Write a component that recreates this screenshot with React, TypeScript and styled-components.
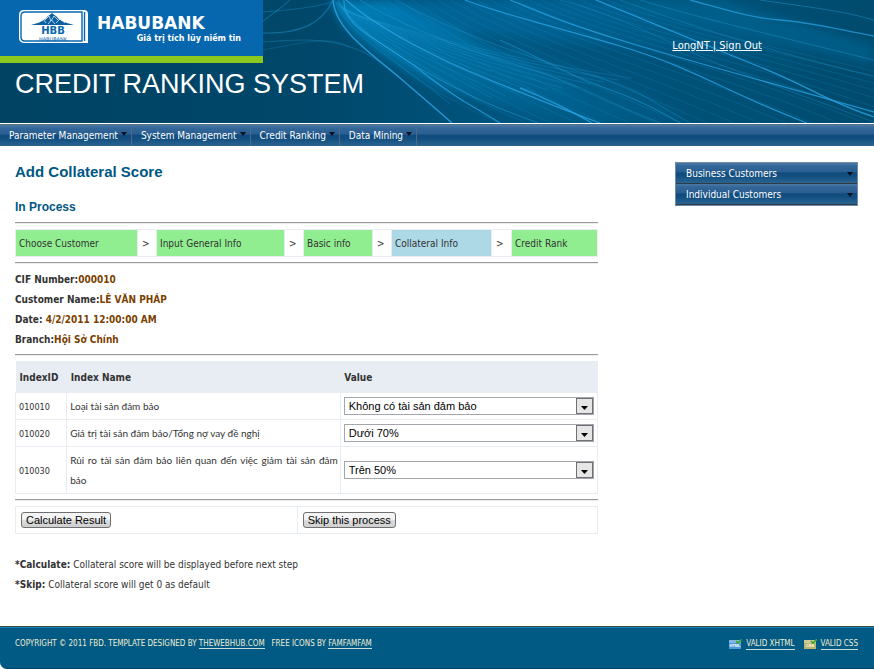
import React from "react";
import styled, { createGlobalStyle } from "styled-components";

const ui = `"DejaVu Sans Condensed", "DejaVu Sans", sans-serif`;
const arial = `"Liberation Sans", Arial, sans-serif`;
const rule = "#e8edf4";

const GlobalStyle = createGlobalStyle`
  * { box-sizing: border-box; }
  body { margin: 0; background: #fff; color: #333; font: 10px/20px ${ui}; }
`;

const Page = styled.div`
  display: flex;
  flex-direction: column;
  min-height: 100vh;
`;

const Header = styled.header`
  position: relative;
  height: 123px;
  overflow: hidden;
  background: #004a6c;
  display: flex;
  justify-content: space-between;
`;

const Artwork = styled.svg`
  position: absolute;
  top: 0;
  left: 0;
  width: 100%;
  height: 100%;
`;

const Brand = styled.div`
  position: relative;
`;

const LogoPanel = styled.div`
  width: 263px;
  height: 63px;
  background: #0767ae;
  border-bottom: 7px solid #8cc81e;
`;

const SystemTitle = styled.h1`
  margin: 5px 0 0 15px;
  font: 27px/32px ${arial};
  color: #fff;
  white-space: nowrap;
`;

const Account = styled.a`
  position: relative;
  margin: 36px 112px 0 0;
  align-self: flex-start;
  color: #fff;
  font-size: 11px;
`;

const barFill = `linear-gradient(#4b7aa3 0, #336699 15%, #2b5f92 42%, #104b7d 50%, #124f80 65%, #2a6491 100%)`;

const Nav = styled.nav`
  display: flex;
  margin-top: 1px;
  height: 22px;
  background: ${barFill};
  border-top: 1px solid #54718c;
`;

const NavItem = styled.a`
  display: flex;
  gap: 3px;
  padding: 0 4px 0 9px;
  border-right: 1px solid #4c6b8a;
  color: #fff;
  line-height: 22px;
  text-decoration: none;
`;

const NavArrow = styled.svg`
  width: 6px;
  height: 4px;
  margin-top: 7px;
`;

const Content = styled.div`
  flex: 1 0 auto;
  display: grid;
  grid-template-columns: minmax(0, 1fr) 183px;
  gap: 77px;
  padding: 16px 16px 30px 15px;
  align-items: start;
`;

const Heading = styled.h2`
  margin: 0 0 15px;
  font: bold 15px/20px ${arial};
  color: #005782;
`;

const SubHeading = styled.h3`
  margin: 0 0 5px;
  font: bold 12px/20px ${arial};
  color: #005782;
`;

const Divider = styled.hr`
  height: 2px;
  margin: 0;
  border: 0;
  border-top: 1px solid #9a9a9a;
  border-bottom: 1px solid #eee;
`;

const Steps = styled.ol`
  display: grid;
  grid-template-columns: 121fr 18fr 127fr 18fr 68fr 18fr 99fr 19fr 85fr;
  gap: 1px;
  margin: 5px 0;
  padding: 1px;
  background: ${rule};
  list-style: none;
`;

const Step = styled.li<{ $kind: "done" | "current" | "arrow" }>`
  padding: 4px 3px 2px;
  padding-left: ${(p) => (p.$kind === "arrow" ? 4 : 3)}px;
  background: ${(p) => ({ done: "#90ee90", current: "#add8e6", arrow: "#fff" })[p.$kind]};
  white-space: nowrap;
`;

const Facts = styled.dl`
  margin: 6px 0 4px;
  font-weight: bold;
`;

const Fact = styled.div`
  display: flex;
  white-space: pre;
`;

const FactValue = styled.dd`
  margin: 0;
  color: #7b3f00;
`;

const Table = styled.table`
  width: 100%;
  margin: 5px 0;
  border-collapse: collapse;
  table-layout: fixed;
`;

const Col = styled.col<{ $share: number }>`
  width: ${(p) => p.$share}%;
`;

const HeadCell = styled.th`
  height: 31px;
  padding: 3px 4px 0;
  background: ${rule};
  text-align: left;
  white-space: nowrap;
`;

const Cell = styled.td`
  padding: 3px;
  border: 1px solid ${rule};
`;

const NameCell = styled(Cell)`
  padding: 3px 2px 3px 3px;
  font-family: Lato, ${ui};
  text-align: justify;
`;

const CodeCell = styled(Cell)`
  padding: 4px 3px 2px;
  font-size: 9px;
`;

const ActionCell = styled(Cell)`
  padding: 5px;
  line-height: 16px;
`;

const Picker = styled.div`
  position: relative;
  display: flex;
`;

const Select = styled.select`
  appearance: none;
  width: 100%;
  height: 18px;
  margin: 1px 0;
  padding: 0 20px 0 4px;
  border: 1px solid #a5a5ad;
  border-radius: 0;
  background: #fff;
  color: #000;
  font: 11px/16px ${arial};
`;

const PickerButton = styled.svg`
  position: absolute;
  right: 1px;
  top: 2px;
  width: 17px;
  height: 16px;
  pointer-events: none;
`;

const Button = styled.button`
  display: block;
  height: 16px;
  padding: 0 4px;
  border: 1px solid #707070;
  border-radius: 3px;
  background: linear-gradient(#f4f4f4 0 45%, #dddddd 50%, #cfcfcf);
  color: #000;
  font: 11px/14px ${arial};
`;

const Notes = styled.div`
  margin-top: 21px;
`;

const Note = styled.p`
  margin: 0;
`;

const Side = styled.nav`
  border: 1px solid #6f8ba5;
`;

const SideItem = styled.a`
  display: flex;
  justify-content: space-between;
  align-items: center;
  height: 21px;
  padding: 2px 4px 0 10px;
  background: ${barFill};
  border-bottom: 1px solid #303a44;
  color: #fff;
  text-decoration: none;
`;

const SideArrow = styled.svg`
  width: 6px;
  height: 4px;
`;

const Footer = styled.footer`
  display: flex;
  flex-shrink: 0;
  justify-content: space-between;
  height: 43px;
  padding: 7px 16px 0 15px;
  border-top: 1px solid #444;
  border-bottom: 1px solid #00466c;
  box-shadow: inset 0 1px #0d87b8;
  border-bottom-left-radius: 7px;
  background: #005a83;
  color: #f2ecd2;
  font-size: 8px;
  white-space: pre;
`;

const FootLink = styled.a`
  color: inherit;
  text-decoration: none;
  border-bottom: 1px solid #c8dcdc;
`;

const Badges = styled.div`
  display: flex;
  gap: 9px;
`;

const Badge = styled.span`
  display: flex;
  align-items: center;
  gap: 4px;
  line-height: 10px;
  height: 20px;
`;

type Stroke = [d: string, width: number, opacity: number];

const strokes: Stroke[] = [
  ["M333 0C335 30 372 54 400 78S435 108 452 123", 1.4, 0.85],
  ["M344 0C342 28 382 40 420 70S470 104 500 123", 1.2, 0.75],
  ["M338 0C350 30 420 70 460 90S510 112 538 123", 1, 0.5],
  ["M346 0C380 30 440 60 490 80S550 105 600 123", 1.3, 0.8],
  ["M360 0C400 25 460 48 520 66S590 95 660 123", 0.8, 0.45],
  ["M395 0C450 30 520 55 580 72S640 95 690 123", 0.8, 0.4],
  ["M465 0C500 14 540 22 620 46S720 90 807 123", 1.3, 0.75],
  ["M510 0C540 12 560 22 630 43S760 80 874 112", 1.3, 0.75],
  ["M596 0C650 22 710 47 760 67S830 103 874 117", 1.3, 0.8],
  ["M560 0C600 10 640 28 680 47S760 80 874 122", 0.8, 0.35],
  ["M690 0C720 8 750 18 780 20S840 30 874 36", 1.3, 0.7],
  ["M640 0C700 18 760 32 874 60", 0.9, 0.4],
  ["M620 0C680 22 770 52 874 76", 0.8, 0.4],
  ["M760 0C800 6 840 10 874 20", 0.9, 0.45],
  ["M500 40C540 58 570 75 600 86S650 105 680 123", 1, 0.5],
  ["M520 88C550 100 570 110 592 123", 1.4, 0.75],
  ["M262 33C300 34 322 24 333 0", 1.2, 0.4],
  ["M262 42C300 40 340 34 380 62", 1, 0.3],
  ["M262 22C272 14 284 6 290 0", 1, 0.45],
  ["M262 12C290 10 310 8 333 2", 1, 0.3],
  ["M262 50C300 44 330 34 350 48", 1, 0.2],
];

const fan = Array.from({ length: 22 }, (_, i) => {
  const end = 500 + i * 26;
  const start = 334 + i * 13;
  return `M${start} 0C${start + 40 + i * 2} 36 ${end - 110} 76 ${end} 123`;
});

const veil = Array.from({ length: 14 }, (_, i) => `M${335 + i} ${i}C${345 + i * 6} 34 ${400 + i * 9} 62 ${450 + i * 14} ${104 - i * 2}`);

function Streams() {
  return (
    <Artwork viewBox="0 0 874 123" preserveAspectRatio="xMinYMin slice" aria-hidden="true">
      <defs>
        <linearGradient id="sea" x1="0" x2="1">
          <stop offset="0" stopColor="#004363" />
          <stop offset="0.35" stopColor="#00476a" />
          <stop offset="0.6" stopColor="#005680" />
          <stop offset="1" stopColor="#004b6e" />
        </linearGradient>
        <linearGradient id="beam" x1="0" y1="0" x2="1" y2="1">
          <stop offset="0" stopColor="#0092d2" stopOpacity="0.75" />
          <stop offset="0.6" stopColor="#0083bd" stopOpacity="0.4" />
          <stop offset="1" stopColor="#0074a8" stopOpacity="0" />
        </linearGradient>
        <linearGradient id="glow" x1="0" y1="0" x2="1" y2="0.5">
          <stop offset="0" stopColor="#0078b4" stopOpacity="0.6" />
          <stop offset="1" stopColor="#0078b4" stopOpacity="0" />
        </linearGradient>
        <filter id="soft"><feGaussianBlur stdDeviation="5" /></filter>
      </defs>
      <rect width="874" height="123" fill="url(#sea)" />
      <g filter="url(#soft)">
        <path d="M332 0C335 25 380 60 440 90L560 123H640C560 80 480 40 390 0Z" fill="url(#beam)" />
        <path d="M345 0H600L874 60V95C700 50 560 40 420 30Z" fill="url(#glow)" />
        <path d="M600 0H720L874 45V65Z" fill="#0078b0" opacity="0.35" />
        <path d="M500 45L640 90L690 123H580Z" fill="#0074a8" opacity="0.2" />
      </g>
      <g fill="none" stroke="#1a95d2">
        {fan.map((d) => <path key={d} d={d} strokeWidth="0.8" opacity="0.25" />)}
        {veil.map((d) => <path key={d} d={d} strokeWidth="1" opacity="0.3" />)}
      </g>
      <g fill="none" stroke="#2aa4e4">
        {strokes.map(([d, w, o]) => <path key={d} d={d} strokeWidth={w} opacity={o} />)}
      </g>
    </Artwork>
  );
}

function Logo() {
  return (
    <svg width="263" height="56" viewBox="0 0 263 56" role="img" aria-label="Habubank">
      <path d="M24 10H84Q88 10 88 14V43H25Q19 43 19 38V15Q19 10 24 10Z" fill="#fff" />
      <path d="M25 12H82V41H25Q21 41 21 37V16Q21 12 25 12Z" fill="none" stroke="#0767ae" strokeWidth="1.4" />
      <path d="M84.500 12V41" stroke="#0767ae" strokeWidth="1.4" />
      <path d="M31 25Q44 22 48 16Q50 15 52 13Q54 15 56 16Q60 22 74 25Z" fill="#0c5fa0" />
      <path d="M38 23L43 19L46 23M45 20L49 16L51 21L54 16L58 20M56 23L60 19L65 23M48 24L51.500 20L55 24" fill="none" stroke="#d8ecfa" strokeWidth="0.8" />
      <text x="53" y="34" textAnchor="middle" fontFamily="DejaVu Sans, sans-serif" fontWeight="700" fontSize="10" fill="#0767ae">HBB</text>
      <text x="53" y="41" textAnchor="middle" fontFamily="DejaVu Sans, sans-serif" fontSize="5" fill="#0767ae">HABUBANK</text>
      <text x="97" y="29" fontFamily="DejaVu Sans, sans-serif" fontWeight="700" fontSize="17" fill="#fff">HABUBANK</text>
      <text x="241" y="41" textAnchor="end" fontFamily="DejaVu Sans, sans-serif" fontWeight="700" fontSize="8" fill="#fff">Giá trị tích lũy niềm tin</text>
    </svg>
  );
}

function ValidIcon({ label, tone }: { label: string; tone: string }) {
  return (
    <svg width="13" height="10" viewBox="0 0 13 10" aria-hidden="true">
      <rect y="1" width="12" height="9" fill={tone} />
      <rect y="1" width="12" height="3" fill="#fff" opacity="0.3" />
      <text x="6" y="8" textAnchor="middle" fontFamily="Liberation Sans, sans-serif" fontWeight="700" fontSize="4" fill="#fff">{label}</text>
      <path d="M7 2L9 4L13 0" fill="none" stroke="#35a52c" strokeWidth="1.6" />
    </svg>
  );
}

const menus = ["Parameter Management", "System Management", "Credit Ranking", "Data Mining"];
const steps = ["Choose Customer", "Input General Info", "Basic info", "Collateral Info", "Credit Rank"];
const facts = [
  ["CIF Number:", "000010"],
  ["Customer Name:", "LÊ VĂN PHÁP"],
  ["Date: ", "4/2/2011 12:00:00 AM"],
  ["Branch:", "Hội Sở Chính"],
];
const rows = [
  ["010010", "Loại tài sản đảm bảo", "Không có tài sản đảm bảo"],
  ["010020", "Giá trị tài sản đảm bảo/Tổng nợ vay đề nghị", "Dưới 70%"],
  ["010030", "Rủi ro tài sản đảm bảo liên quan đến việc giảm tài sản đảm bảo", "Trên 50%"],
];

export default function App() {
  return (
    <Page>
      <GlobalStyle />
      <Header>
        <Streams />
        <Brand>
          <LogoPanel><Logo /></LogoPanel>
          <SystemTitle>CREDIT RANKING SYSTEM</SystemTitle>
        </Brand>
        <Account href="#account">LongNT | Sign Out</Account>
      </Header>
      <Nav>
        {menus.map((m) => (
          <NavItem key={m} href="#menu">
            {m}
            <NavArrow viewBox="0 0 6 4"><path d="M0 0H6L3 4Z" fill="#06121f" /></NavArrow>
          </NavItem>
        ))}
      </Nav>
      <Content>
        <main>
          <Heading>Add Collateral Score</Heading>
          <SubHeading>In Process</SubHeading>
          <Divider />
          <Steps>
            {steps.map((s, i) => (
              <React.Fragment key={s}>
                {i > 0 && <Step $kind="arrow" aria-hidden="true">&gt;</Step>}
                <Step $kind={s === "Collateral Info" ? "current" : "done"}>{s}</Step>
              </React.Fragment>
            ))}
          </Steps>
          <Divider />
          <Facts>
            {facts.map(([k, v]) => (
              <Fact key={k}><dt>{k}</dt><FactValue>{v}</FactValue></Fact>
            ))}
          </Facts>
          <Divider />
          <Table>
            <colgroup><Col $share={8.8} /><Col $share={47} /><Col $share={44.2} /></colgroup>
            <thead>
              <tr><HeadCell>IndexID</HeadCell><HeadCell>Index Name</HeadCell><HeadCell>Value</HeadCell></tr>
            </thead>
            <tbody>
              {rows.map(([id, name, value]) => (
                <tr key={id}>
                  <CodeCell>{id}</CodeCell>
                  <NameCell>{name}</NameCell>
                  <Cell>
                    <Picker>
                      <Select aria-label={name}><option>{value}</option></Select>
                      <PickerButton viewBox="0 0 17 16">
                        <rect x="0.500" y="0.500" width="16" height="15" fill="#e6e6e6" stroke="#707070" />
                        <path d="M5 8H12L8.500 12Z" fill="#000" />
                      </PickerButton>
                    </Picker>
                  </Cell>
                </tr>
              ))}
            </tbody>
          </Table>
          <Divider />
          <Table>
            <colgroup><Col $share={48.4} /><Col $share={51.6} /></colgroup>
            <tbody>
              <tr>
                <ActionCell><Button type="button">Calculate Result</Button></ActionCell>
                <ActionCell><Button type="button">Skip this process</Button></ActionCell>
              </tr>
            </tbody>
          </Table>
          <Notes>
            <Note><b>*Calculate:</b> Collateral score will be displayed before next step</Note>
            <Note><b>*Skip:</b> Collateral score will get 0 as default</Note>
          </Notes>
        </main>
        <Side>
          {["Business Customers", "Individual Customers"].map((s) => (
            <SideItem key={s} href="#customers">
              {s}
              <SideArrow viewBox="0 0 6 4"><path d="M0 0H6L3 4Z" fill="#06121f" /></SideArrow>
            </SideItem>
          ))}
        </Side>
      </Content>
      <Footer>
        <span>COPYRIGHT © 2011 FBD. TEMPLATE DESIGNED BY <FootLink href="#webhub">THEWEBHUB.COM</FootLink>{"   "}FREE ICONS BY <FootLink href="#famfamfam">FAMFAMFAM</FootLink></span>
        <Badges>
          <Badge><ValidIcon label="HTML" tone="#4f97d8" /><FootLink href="#xhtml">VALID XHTML</FootLink></Badge>
          <Badge><ValidIcon label="CSS" tone="#b9b36c" /><FootLink href="#css">VALID CSS</FootLink></Badge>
        </Badges>
      </Footer>
    </Page>
  );
}
